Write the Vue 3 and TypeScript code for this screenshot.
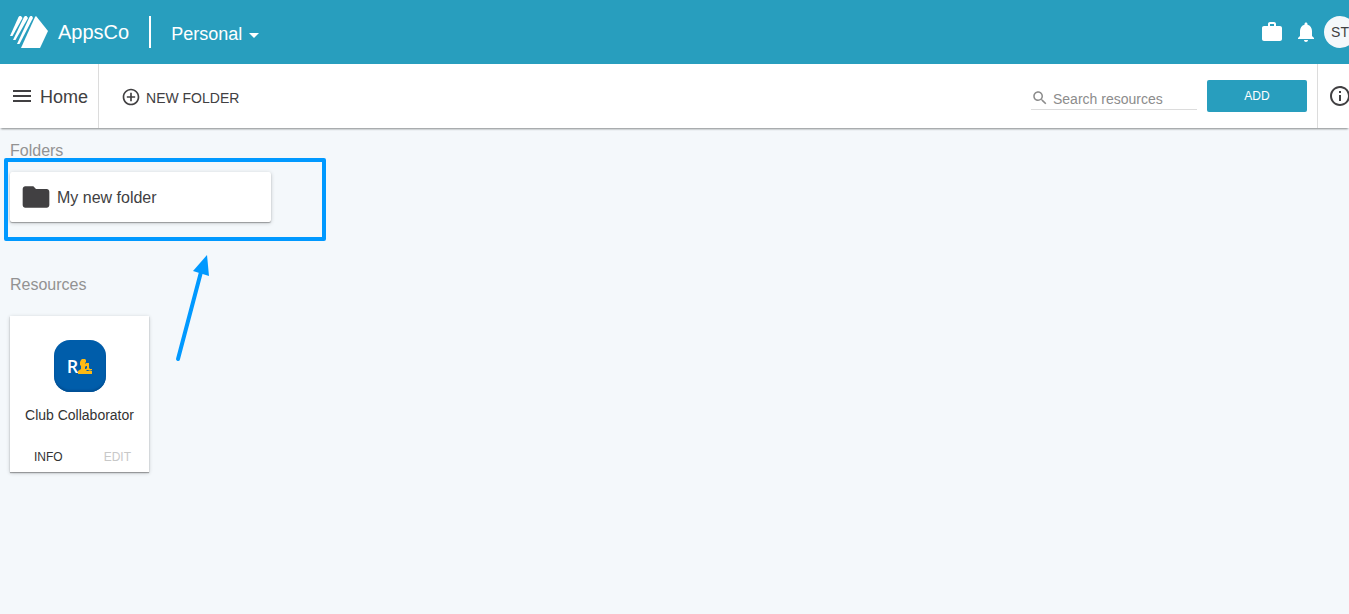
<script setup lang="ts">
import { ref } from 'vue'

interface Folder { id: number; name: string }
interface Resource { id: number; name: string; editable: boolean }

const query = ref('')
const folders: Folder[] = [{ id: 1, name: 'My new folder' }]
const resources: Resource[] = [{ id: 1, name: 'Club Collaborator', editable: false }]
</script>

<template>
  <div class="app">
    <header class="topbar">
      <a class="brand" href="#">
        <svg class="logo" width="38" height="32" viewBox="0 0 38 32" aria-hidden="true">
          <path d="M26 0 38 15 30 32H11L25 1Z" />
          <path d="M19.500 1 20.500 0H22L23 2 9.500 28H7Z" />
          <path d="M14 1 15 0H16.500L18 2 5.500 24H3Z" />
          <path d="M8.500 1 9.500 0H11L12.500 2 2.500 20H0Z" />
        </svg>
        <span>AppsCo</span>
      </a>
      <button class="account" type="button">
        <span>Personal</span>
        <svg width="10" height="5" viewBox="0 0 10 5" aria-hidden="true"><path d="M0 0h10L5 5z" /></svg>
      </button>
      <div class="tools">
        <button class="icon" type="button" aria-label="Work">
          <svg width="24" height="24" viewBox="0 0 24 24"><path d="M20 6h-4V4c0-1.110-.89-2-2-2h-4c-1.110 0-2 .89-2 2v2H4c-1.110 0-1.990.89-1.990 2L2 19c0 1.110.89 2 2 2h16c1.110 0 2-.89 2-2V8c0-1.110-.89-2-2-2zm-6 0h-4V4h4v2z" /></svg>
        </button>
        <button class="icon" type="button" aria-label="Notifications">
          <svg width="24" height="24" viewBox="0 0 24 24"><path d="M12 22c1.100 0 2-.9 2-2h-4c0 1.100.89 2 2 2zm6-6v-5c0-3.070-1.640-5.640-4.500-6.320V4c0-.83-.67-1.500-1.500-1.500s-1.500.67-1.500 1.500v.68C7.630 5.360 6 7.920 6 11v5l-2 2v1h16v-1l-2-2z" /></svg>
        </button>
        <button class="avatar" type="button">ST</button>
      </div>
    </header>

    <nav class="subbar">
      <button class="home" type="button">
        <svg width="24" height="24" viewBox="0 0 24 24" aria-hidden="true"><path d="M3 18h18v-2H3v2zm0-5h18v-2H3v2zm0-7v2h18V6H3z" /></svg>
        <span class="label">Home</span>
      </button>
      <button class="new-folder" type="button">
        <svg width="20" height="20" viewBox="0 0 24 24" aria-hidden="true"><path d="M13 7h-2v4H7v2h4v4h2v-4h4v-2h-4V7zm-1-5C6.480 2 2 6.480 2 12s4.480 10 10 10 10-4.480 10-10S17.520 2 12 2zm0 18c-4.410 0-8-3.590-8-8s3.590-8 8-8 8 3.590 8 8-3.590 8-8 8z" /></svg>
        <span class="label">NEW FOLDER</span>
      </button>
      <label class="search">
        <svg width="18" height="18" viewBox="0 0 24 24" aria-hidden="true"><path d="M15.500 14h-.79l-.28-.27C15.410 12.590 16 11.110 16 9.500 16 5.910 13.090 3 9.500 3S3 5.910 3 9.500 5.910 16 9.500 16c1.610 0 3.090-.59 4.230-1.570l.27.28v.79l5 4.990L20.490 19l-4.990-5zm-6 0C7.010 14 5 11.990 5 9.500S7.010 5 9.500 5 14 7.010 14 9.500 11.990 14 9.500 14z" /></svg>
        <input v-model="query" type="text" placeholder="Search resources" aria-label="Search resources" />
      </label>
      <button class="add" type="button">ADD</button>
      <div class="info-pane">
        <button class="icon" type="button" aria-label="Details">
          <svg width="24" height="24" viewBox="0 0 24 24"><path d="M11 17h2v-6h-2v6zm1-15C6.480 2 2 6.480 2 12s4.480 10 10 10 10-4.480 10-10S17.520 2 12 2zm0 18c-4.410 0-8-3.590-8-8s3.590-8 8-8 8 3.590 8 8-3.590 8-8 8zM11 9h2V7h-2v2z" /></svg>
        </button>
      </div>
    </nav>

    <main class="content">
      <section class="folders">
        <h2>Folders</h2>
        <div class="list">
          <button v-for="f in folders" :key="f.id" class="folder" type="button">
            <svg width="32" height="32" viewBox="0 0 24 24" aria-hidden="true"><path d="M10 4H4c-1.100 0-1.990.9-1.990 2L2 18c0 1.100.9 2 2 2h16c1.100 0 2-.9 2-2V8c0-1.100-.9-2-2-2h-8l-2-2z" /></svg>
            <span class="label">{{ f.name }}</span>
          </button>
        </div>
        <div class="highlight"></div>
        <svg class="arrow" width="36" height="108" viewBox="0 0 36 108" aria-hidden="true">
          <path class="shaft" d="M4 105 27 18" />
          <path d="M33 1 35 22 19 17Z" />
        </svg>
      </section>

      <section class="resources">
        <h2>Resources</h2>
        <div class="list">
          <article v-for="r in resources" :key="r.id" class="card">
            <div class="app-icon">
              <span>R</span>
              <svg width="14" height="15" viewBox="0 0 14 15" aria-hidden="true">
                <path d="M3 1 4 0H7L8 1V3L7 4 8 5V4H11V9L12 10H14V11L11 12H14V15H0V12L3 10V7L2 6V3Z" />
                <path class="gap" d="M8 7H9V9L8 10H7V8ZM8 11H10L12 12H9Z" />
              </svg>
            </div>
            <h3>{{ r.name }}</h3>
            <div class="actions">
              <button type="button">INFO</button>
              <button type="button" :disabled="!r.editable">EDIT</button>
            </div>
          </article>
        </div>
      </section>
    </main>
  </div>
</template>

<style>
body {
  background: #f4f8fb;
}
</style>

<style scoped>
.app {
  min-height: 100vh;
  overflow: hidden;
  background: #f4f8fb;
  color: #414042;
  font-family: "Liberation Sans", Arial, sans-serif;
}
svg {
  display: block;
  flex: none;
  fill: currentColor;
}
button {
  margin: 0;
  padding: 0;
  border: 0;
  background: none;
  color: inherit;
  font: inherit;
}
h2,
h3 {
  margin: 0;
  font-weight: normal;
}
.label {
  padding-top: 2px;
}
.topbar {
  display: flex;
  align-items: center;
  height: 64px;
  padding-left: 10px;
  background: #289ebe;
  color: #fff;
}
.brand {
  display: flex;
  align-items: center;
  gap: 10px;
  height: 32px;
  padding-right: 20px;
  border-right: 2px solid #fff;
  color: inherit;
  font-size: 20px;
  text-decoration: none;
}
.account {
  display: flex;
  align-items: center;
  gap: 7px;
  padding: 4px 0 0 20px;
  font-size: 18px;
  line-height: 20px;
}
.account svg {
  margin-top: 2px;
}
.tools {
  display: flex;
  align-items: center;
  gap: 10px;
  margin-left: auto;
  margin-right: -7px;
}
.avatar {
  width: 32px;
  height: 32px;
  margin-left: -4px;
  border-radius: 50%;
  background: #f4f8fb;
  color: #414042;
  font-size: 14px;
}
.subbar {
  position: relative;
  display: flex;
  align-items: center;
  height: 64px;
  background: #fff;
  box-shadow: 0 2px 2px -1px rgba(0, 0, 0, 0.45);
}
.home {
  display: flex;
  align-items: center;
  align-self: stretch;
  gap: 6px;
  padding: 0 10px;
  border-right: 1px solid #dcdcdc;
  font-size: 18px;
}
.new-folder {
  display: flex;
  align-items: center;
  gap: 5px;
  margin-left: 22px;
  padding-top: 2px;
  font-size: 14px;
}
.search {
  display: flex;
  align-items: center;
  gap: 4px;
  width: 166px;
  margin: 4px 10px 0 auto;
  padding: 2px 0;
  border-bottom: 1px solid #dcdcdc;
  color: #8c8c8c;
}
.search input {
  flex: 1;
  min-width: 0;
  padding: 2px 0 0;
  border: 0;
  outline: 0;
  background: none;
  color: #414042;
  font: inherit;
  font-size: 14px;
}
.search input::placeholder {
  color: #8c8c8c;
  opacity: 1;
}
.add {
  width: 100px;
  height: 32px;
  border-radius: 2px;
  background: #289ebe;
  color: #fff;
  font-size: 12px;
}
.info-pane {
  display: flex;
  align-items: center;
  align-self: stretch;
  margin-left: 10px;
  margin-right: -3px;
  padding-left: 10px;
  border-left: 1px solid #dcdcdc;
}
.content {
  display: flex;
  flex-direction: column;
  gap: 53px;
  padding: 13px 10px;
}
.folders {
  position: relative;
}
h2 {
  color: #929292;
  font-size: 16px;
  line-height: 20px;
}
.list {
  display: flex;
  flex-wrap: wrap;
  gap: 10px;
}
.folders .list {
  padding-top: 11px;
}
.resources .list {
  padding-top: 21px;
}
.folder {
  display: flex;
  align-items: center;
  gap: 5px;
  width: 261px;
  height: 50px;
  padding: 0 10px;
  border-radius: 2px;
  font-size: 16px;
}
.folder,
.card {
  background: #fff;
  box-shadow: 0 1px 1px rgba(0, 0, 0, 0.3), 0 1px 4px rgba(0, 0, 0, 0.2);
}
.highlight {
  position: absolute;
  top: 17px;
  left: -6px;
  box-sizing: border-box;
  width: 322px;
  height: 83px;
  border: 4px solid #0099ff;
  border-radius: 2px;
}
.arrow {
  position: absolute;
  top: 113px;
  left: 164px;
  fill: #0099ff;
}
.shaft {
  fill: none;
  stroke: #0099ff;
  stroke-width: 4;
  stroke-linecap: round;
}
.card {
  display: flex;
  flex-direction: column;
  align-items: center;
  width: 139px;
  padding-top: 24px;
}
.app-icon {
  display: flex;
  align-items: center;
  justify-content: center;
  width: 52px;
  height: 52px;
  border-radius: 16px;
  background: #005daa;
  box-shadow: inset 0 -2px 2px #004f94;
  color: #fff;
  font-family: "Open Sans", "Liberation Sans", sans-serif;
  font-size: 18px;
  font-weight: 600;
}
.app-icon svg {
  fill: #fdb913;
}
.app-icon .gap {
  fill: #005daa;
}
h3 {
  margin-top: 13px;
  font-size: 14px;
  line-height: 20px;
  color: #333;
}
.actions {
  display: flex;
  align-self: stretch;
  justify-content: space-between;
  margin-top: 17px;
  padding: 0 18px 0 24px;
  font-size: 12px;
  line-height: 30px;
  color: #333;
}
.actions button:disabled {
  color: #c8c8c8;
}
</style>
